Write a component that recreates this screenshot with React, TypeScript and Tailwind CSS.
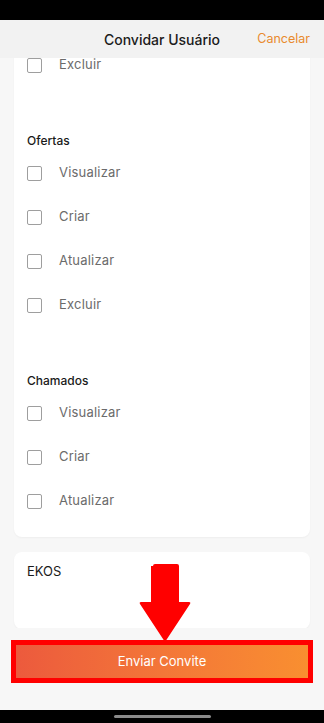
import React from 'react'

const FONT = { fontFamily: 'Inter, "Noto Sans", sans-serif' }

type Section = { title?: string; items: string[] }

const SECTIONS: Section[] = [
  { items: ['Excluir'] },
  { title: 'Ofertas', items: ['Visualizar', 'Criar', 'Atualizar', 'Excluir'] },
  { title: 'Chamados', items: ['Visualizar', 'Criar', 'Atualizar'] },
]

function CheckRow({ label }: { label: string }) {
  return (
    <label className="flex h-11 items-center">
      <span className="ml-[13px] h-[15px] w-[15px] rounded-[2px] border-[1.5px] border-[#9e9e9e] bg-white" />
      <span className="ml-[17px] text-[13px] tracking-[0.2px] text-[#6b6b6b]">{label}</span>
    </label>
  )
}

export default function App() {
  return (
    <div className="relative flex h-[723px] w-full flex-col overflow-hidden bg-[#f7f7f7]" style={FONT}>
      {/* status bar */}
      <div className="h-5 shrink-0 bg-black" />

      {/* header */}
      <div className="z-10 grid h-[38px] shrink-0 grid-cols-[1fr_auto_1fr] items-center bg-[#f2f2f2]">
        <div />
        <div className="text-[14px] font-medium text-[#1c1c1c]">Convidar Usuário</div>
        <div className="flex justify-end pr-[14px] text-[12.5px] text-[#e98a2e]">Cancelar</div>
      </div>

      {/* permissions card, scrolled */}
      <div className="flex-1 overflow-hidden px-[14px]">
        <div className="-mt-[15px] rounded-b-lg bg-white pb-[14px] shadow-[0_1px_2px_rgba(0,0,0,0.04)]">
          {SECTIONS.map((s, i) => (
            <div key={i}>
              {i > 0 && <div className="h-11" />}
              {s.title && (
                <div className="flex h-5 items-center pl-[13px] text-[12px] font-medium text-[#1a1a1a]">
                  {s.title}
                </div>
              )}
              {s.items.map((it) => (
                <CheckRow key={s.title + it} label={it} />
              ))}
            </div>
          ))}
        </div>

        <div className="mt-[15px] h-[77px] rounded-lg bg-white px-[13px] pt-[10px] text-[13px] text-[#1a1a1a] shadow-[0_1px_2px_rgba(0,0,0,0.04)]">
          EKOS
        </div>
      </div>

      {/* send button with red highlight */}
      <div className="mb-[27px] mt-3 shrink-0 px-[11px]">
        <button className="flex h-[43px] w-full items-center justify-center border-[5px] border-[#ff0000] bg-gradient-to-r from-[#ec5a3d] to-[#f98f30] text-[13px] text-white">
          Enviar Convite
        </button>
      </div>

      {/* nav bar */}
      <div className="flex h-[13px] shrink-0 items-center justify-center bg-black">
        <div className="h-[3px] w-[97px] rounded-full bg-[#8a8a8a]" />
      </div>

      {/* annotation arrow */}
      <svg className="pointer-events-none absolute left-[138px] top-[562px]" width="54" height="82" viewBox="0 0 54 82">
        <path
          d="M15 4 Q15 2 17 2 L39 2 Q41 2 41 4 L41 40 L51 40 Q53 40 52 42 L27 80 L2 42 Q1 40 3 40 L13 40 L13 4 Z"
          fill="#ff0000"
        />
      </svg>
    </div>
  )
}
